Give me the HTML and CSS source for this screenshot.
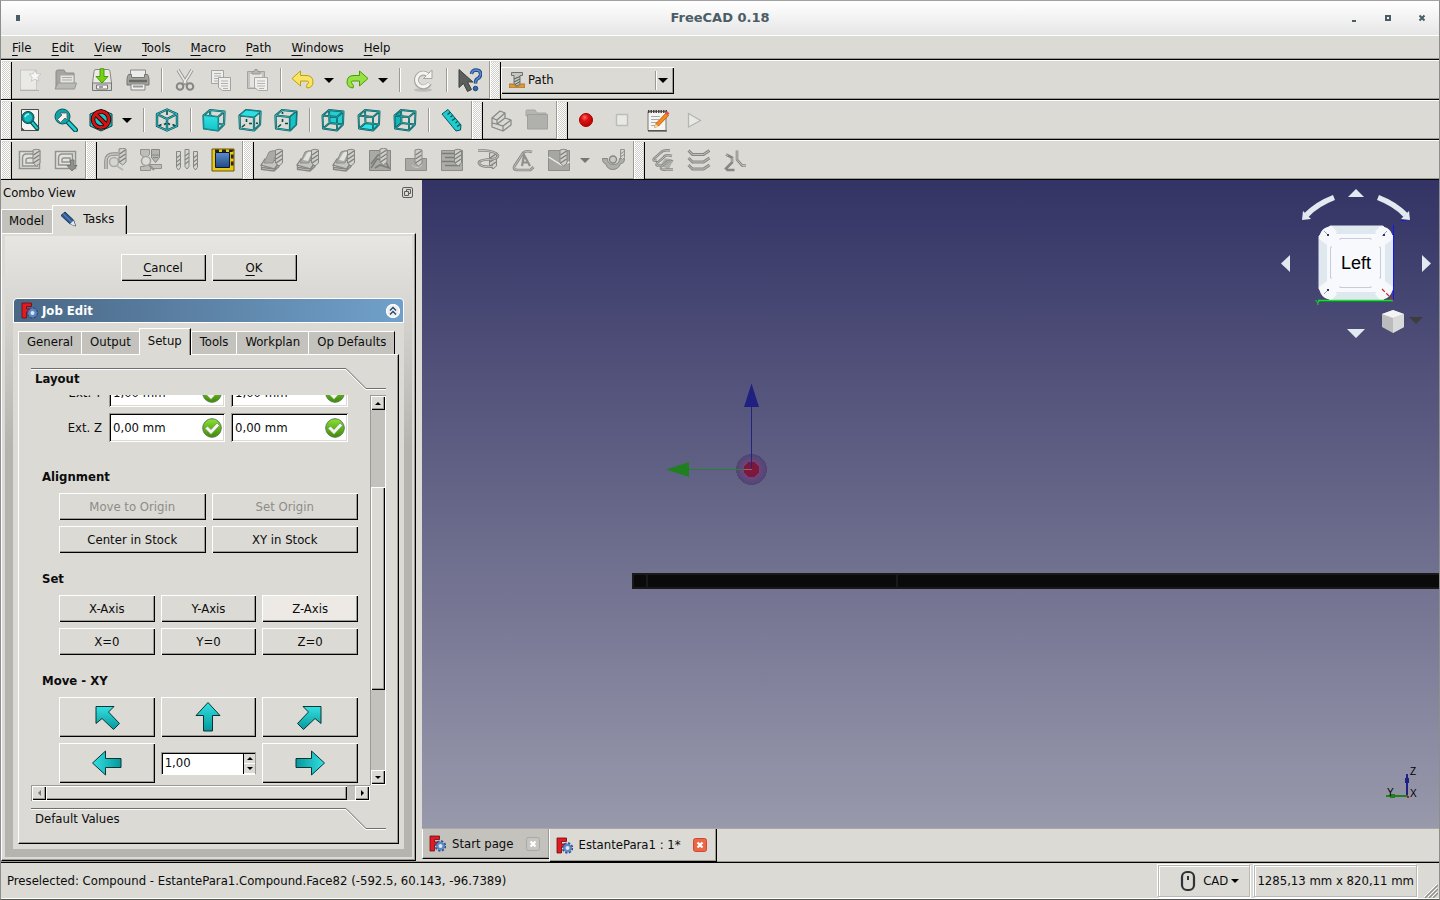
FILE: index.html
```html
<!DOCTYPE html>
<html lang="en">
<head>
<meta charset="utf-8">
<title>FreeCAD 0.18</title>
<link rel="stylesheet" href="styles.css">
</head>
<body>
<svg class="defs" width="0" height="0" aria-hidden="true">
  <defs>
    <linearGradient id="g-teal" x1="0" y1="0" x2="0" y2="1"><stop offset="0" stop-color="#34e0e2"/><stop offset="1" stop-color="#06989a"/></linearGradient>
    <linearGradient id="g-face" x1="0" y1="0" x2="0" y2="1"><stop offset="0" stop-color="#34e0e2"/><stop offset="1" stop-color="#16c4c8"/></linearGradient>
    <linearGradient id="g-green" x1="0" y1="0" x2="0" y2="1"><stop offset="0" stop-color="#8ae234"/><stop offset="1" stop-color="#3c8a04"/></linearGradient>
    <linearGradient id="g-blue" x1="0" y1="0" x2="0" y2="1"><stop offset="0" stop-color="#5d8cc8"/><stop offset="1" stop-color="#204a87"/></linearGradient>
    <radialGradient id="g-rec" cx="0.4" cy="0.3" r="0.8"><stop offset="0" stop-color="#ff6a6a"/><stop offset="0.35" stop-color="#e01010"/><stop offset="1" stop-color="#a80000"/></radialGradient>
    <radialGradient id="g-orb"><stop offset="0" stop-color="#803070"/><stop offset="0.5" stop-color="#6c4580"/><stop offset="1" stop-color="#4c4770"/></radialGradient>
    <g id="bit">
      <path d="M0.5 1q3.500-1.500 7 0v13l-3.500 3-3.500-3z" fill="#cfcfcb" stroke="#868683"/>
      <path d="M1 6l6-4M1 10l6-4M1 14l6-4" fill="none" stroke="#7c7c79" stroke-width="1.200"/>
    </g>
    <path id="wire" d="M1.500 7.500L16 9V22.500L2 20.500ZM8 2L22.500 3.500L22 16.500L8.500 15ZM1.500 7.500L8 2M16 9L22.500 3.500M16 22.500L22 16.500M2 20.500L8.500 15" fill="none" stroke-linejoin="round"/>
    <path id="hull" d="M1.500 7.500L16 9V22.500L2 20.500ZM1.500 7.500L8 2L22.500 3.500L22 16.500L16 22.500M16 9L22.500 3.500" fill="none" stroke-linejoin="round"/>
    <g id="caddie">
      <path d="M1 17l4-6 14 2-4 8z" fill="#c4c4c0" stroke="#868683" stroke-width="1.300"/>
      <path d="M1.500 17.500v4l12.500 1.500 5-4.500v-5M2 19.500l12 1.500 5-5" fill="none" stroke="#868683" stroke-width="1.300"/>
      <path d="M4 15l5-11q3-2 8-1l-4 12z" fill="#aaaaa7" stroke="#8f8f8c"/>
    </g>

    <symbol id="i-new" viewBox="0 0 24 24"><path d="M2.500 2h16v20h-16z" fill="#e9e9e6" stroke="#c6c6c2"/><path d="M2 22.500h19" stroke="#b2b2ae"/><path d="M17 2l1.600 3.600 4.400.6-3.200 2.800 1 4.300-3.800-2.200-3.700 2.200.9-4.300-3.200-2.800 4.300-.6z" fill="#f6f6f4" stroke="#c2c2be" stroke-width=".8"/></symbol>
    <symbol id="i-open" viewBox="0 0 24 24"><path d="M2 20V4q0-2 2-2h6l2 3h8v15z" fill="#a5a5a2" stroke="#8c8c89"/><path d="M6 7h14v9H6z" fill="#e4e4e1" stroke="#a2a29f"/><path d="M8 9.500h10M8 12h10" stroke="#aaa"/><path d="M1 21l3-6h18.500l-2 6z" fill="#b9b9b6" stroke="#979794"/></symbol>
    <symbol id="i-save" viewBox="0 0 24 24"><path d="M4 3.500q0-2 2-2h12q2 0 2 2L21.500 15v7h-19v-7z" fill="#eaeae7" stroke="#878784"/><path d="M2.500 15h19v7.500h-19z" fill="#d3d3d0" stroke="#777"/><path d="M6.500 17h11v4h-11z" fill="#f4f4f2" stroke="#777"/><path d="M9 19h4" stroke="#444"/><path d="M10 .8h4v7.700h4L12 15 6 8.500h4z" fill="#73d216" stroke="#4e9a06"/></symbol>
    <symbol id="i-print" viewBox="0 0 24 24"><path d="M4.500 2h15v8h-15z" fill="#ececea" stroke="#8a8a87"/><path d="M2.500 6.500h3v3h13v-3h3q1.500 2 1.500 5V17h-22v-5.500q0-3 1.500-5z" fill="#a2a29f" stroke="#777774"/><path d="M3 13h18" stroke="#696966" stroke-width="2.500"/><path d="M5 16h14v6H5z" fill="#f0f0ee" stroke="#868683"/><path d="M7 18.500h10" stroke="#999" stroke-width="2"/></symbol>
    <symbol id="i-cut" viewBox="0 0 24 24"><path d="M5 2l9 14.500M19 2l-9 14.500" stroke="#969693" stroke-width="3.400"/><path d="M5 2l8 13M19 2l-8 13" stroke="#e9e9e6" stroke-width="1.600"/><circle cx="7" cy="18.500" r="3.300" fill="none" stroke="#868683" stroke-width="2"/><circle cx="17" cy="18.500" r="3.300" fill="none" stroke="#868683" stroke-width="2"/></symbol>
    <symbol id="i-copy" viewBox="0 0 24 24"><path d="M2.500 2.500h12v13h-12z" fill="#eeeeec" stroke="#a3a3a0"/><path d="M5 5.500h7M5 8h7M5 10.500h6M5 13h5" stroke="#b0b0ad"/><path d="M9.500 9.500h12v13h-8l-4-3z" fill="#eeeeec" stroke="#a3a3a0"/><path d="M12 13h7M12 15.500h7M12 18h7M14 20.500h5" stroke="#b0b0ad"/></symbol>
    <symbol id="i-paste" viewBox="0 0 24 24"><path d="M2.500 3.500h17v17h-17z" fill="#c4c4c0" stroke="#a3a3a0"/><path d="M5 6h12v13H5z" fill="#e4e4e1"/><path d="M7 6V3.500h2l1-2h2l1 2h2V6z" fill="#b7b7b3" stroke="#979794"/><path d="M9.500 9.500h13v13h-9l-4-3z" fill="#efefed" stroke="#a9a9a6"/><path d="M12 13h8M12 15.500h8M12 18h8M14 20.500h5" stroke="#b4b4b0"/></symbol>
    <symbol id="i-undo" viewBox="0 0 24 24"><path d="M1 10.500L9.500 3v4.500H15q7 0 7 6.500 0 5.500-6 6-1.500-3 1-4.500 2-2.500-2-2.500H9.500V18z" fill="#f8e465" stroke="#c4a000" stroke-linejoin="round"/></symbol>
    <symbol id="i-redo" viewBox="0 0 24 24"><path d="M23 10.500L14.500 3v4.500H9q-7 0-7 6.500 0 5.500 6 6 1.500-3-1-4.500-2-2.500 2-2.500h5.500V18z" fill="#95e245" stroke="#4e9a06" stroke-linejoin="round"/></symbol>
    <symbol id="i-refresh" viewBox="0 0 24 24"><ellipse cx="12" cy="22" rx="9" ry="1.800" fill="#bdbdb9"/><path d="M18.500 15.500A7 7 0 1 1 16.500 6.500" fill="none" stroke="#a5a5a2" stroke-width="5"/><path d="M21 2V10.500H12.500z" fill="#f4f4f2" stroke="#a5a5a2"/><path d="M18 15.500A6.800 6.800 0 1 1 16.500 6.500" fill="none" stroke="#f4f4f2" stroke-width="3"/></symbol>
    <symbol id="i-what" viewBox="0 0 24 24"><path d="M1 1.500v18l4.500-4 4 8 4-2-4-7.500h5.500z" fill="#5b5e5a" stroke="#3d403d" stroke-linejoin="round"/><path d="M13.500 6q.5-4 5-4 4.500.5 4 5-.4 2.500-3.500 4-1.500 1-1.500 4.500" fill="none" stroke="#204a87" stroke-width="3.600"/><path d="M13.500 6q.5-4 5-4 4.500.5 4 5-.4 2.500-3.500 4-1.500 1-1.500 4.500" fill="none" stroke="#5d8cc8" stroke-width="1.500"/><circle cx="17.500" cy="20.500" r="2.300" fill="#3465a4" stroke="#204a87"/></symbol>
    <symbol id="i-path" viewBox="0 0 16 16"><path d="M0 12h5l1 2h4l1-2h5v4H0z" fill="#d99b3d" stroke="#9a6a20" stroke-width=".8"/><path d="M2.500 0.500h11v3h-2.500v8l-3 2.500-3-2.500v-8H2.500z" fill="#c4c6c2" stroke="#6e706c"/><path d="M5 7l6-2.500M5 10l6-3M6 12.500l5-3" stroke="#555753"/></symbol>

    <symbol id="i-fit" viewBox="0 0 24 24"><path d="M3.500 1.500h17v21h-14l-3-3z" fill="#f3f3f1" stroke="#4a4c4a"/><path d="M3 18v5h6q-4-1-6-5z" fill="#555753"/><path d="M13 13l6 7" stroke="#06484a" stroke-width="4.500" stroke-linecap="round"/><path d="M13 13l6 7" stroke="#1cc6ca" stroke-width="2.400" stroke-linecap="round"/><circle cx="10" cy="9.500" r="6" fill="#078a8d" stroke="#06484a"/><circle cx="10" cy="9.500" r="4.200" fill="#18bcc0"/><path d="M7 9q1-3 4-3" stroke="#a9f2f3" fill="none" stroke-width="1.500"/></symbol>
    <symbol id="i-fitsel" viewBox="0 0 24 24"><path d="M13 13l8.500 9" stroke="#06484a" stroke-width="5" stroke-linecap="round"/><path d="M13 13l8.500 9" stroke="#20cfd2" stroke-width="2.800" stroke-linecap="round"/><circle cx="8.500" cy="8.500" r="7.500" fill="#0fa5a8" stroke="#06585a"/><path d="M3.500 11.500L8 7 6 5h7v7l-2-2-4.500 4.500z" fill="#f3f3f1" stroke="#555" stroke-width=".8"/></symbol>
    <symbol id="i-draw" viewBox="0 0 24 24"><path d="M1 6L12 1.500 23 6v12l-11 5-11-5z" fill="#18c4c8" stroke="#06484a" stroke-linejoin="round"/><circle cx="12" cy="11.500" r="8" fill="none" stroke="#300" stroke-width="4.600"/><path d="M6.500 6l11 11" stroke="#300" stroke-width="4.600"/><circle cx="12" cy="11.500" r="8" fill="none" stroke="#d01414" stroke-width="2.800"/><path d="M6.500 6l11 11" stroke="#d01414" stroke-width="2.800"/></symbol>
    <symbol id="i-iso" viewBox="0 0 24 24"><g fill="none" stroke-linejoin="round"><path d="M12 1.500L22 6v12l-10 4.500L2 18V6zM2 6l10 5 10-5M12 11v11.500" stroke="#06585a" stroke-width="2.400"/><path d="M12 3v4M12 15l-3 1.500M12 15l3 1.500M3.500 18l3-1.500M20.500 18l-3-1.500" stroke="#06484a" stroke-width="1.600"/><path d="M12 1.500L22 6v12l-10 4.500L2 18V6zM2 6l10 5 10-5M12 11v11.500" stroke="#3cc4c7" stroke-width=".9"/></g></symbol>
    <symbol id="i-front" viewBox="0 0 24 24"><use href="#wire" stroke="#07585a" stroke-width="2.200"/><use href="#wire" stroke="#3cc4c7" stroke-width=".8"/><path d="M1.500 7.500L16 9V22.500L2 20.500Z" fill="url(#g-face)" stroke="#0b9094"/></symbol>
    <symbol id="i-top" viewBox="0 0 24 24"><use href="#hull" stroke="#07585a" stroke-width="2.200"/><use href="#hull" stroke="#3cc4c7" stroke-width=".8"/><path d="M1.500 7.500L8 2l14.500 1.500L16 9z" fill="#2fdde0" stroke="#0b8286"/><path d="M8.500 11v3M11 15.500h3M4 19l3-2.500M18 15l2 .5" stroke="#064a4c" stroke-width="1.600"/></symbol>
    <symbol id="i-right" viewBox="0 0 24 24"><use href="#hull" stroke="#07585a" stroke-width="2.200"/><use href="#hull" stroke="#3cc4c7" stroke-width=".8"/><path d="M16 9l6.500-5.500L22 16.500l-6 6z" fill="#16c4c8" stroke="#07686b"/><path d="M8.500 4v2M8.500 11v3M11 15.500h3M4 19l3-2.500" stroke="#064a4c" stroke-width="1.600"/></symbol>
    <symbol id="i-rear" viewBox="0 0 24 24"><path d="M8 2l14.500 1.500L22 16.500 8.500 15z" fill="#25cdd1"/><use href="#wire" stroke="#07585a" stroke-width="1.900"/><use href="#wire" stroke="#3cc4c7" stroke-width=".6"/></symbol>
    <symbol id="i-bottom" viewBox="0 0 24 24"><path d="M2 20.500L8.500 15l13.500 1.500-6 6z" fill="#2fe3e6"/><use href="#wire" stroke="#07585a" stroke-width="1.900"/><use href="#wire" stroke="#3cc4c7" stroke-width=".6"/></symbol>
    <symbol id="i-left" viewBox="0 0 24 24"><path d="M1.500 7.500L8 2l.5 13L2 20.500z" fill="#17b4b8"/><use href="#wire" stroke="#07585a" stroke-width="1.900"/><use href="#wire" stroke="#3cc4c7" stroke-width=".6"/></symbol>
    <symbol id="i-ruler" viewBox="0 0 24 24"><path d="M2 6l6-4.500L21 17l-.5 5-4.500 1z" fill="#20ccd0" stroke="#06585a" stroke-linejoin="round"/><path d="M10 4.500L7.500 6.500M12.500 7.500l-2 1.500M15 10.500l-3 2M17.500 13.500l-2 1.500M20 16.500l-3 2" stroke="#064a4c" stroke-width="1.200"/></symbol>

    <symbol id="i-part" viewBox="0 0 24 24"><path d="M3 10l8-7 5 2v5l6 2v5l-8 6-11-4z" fill="#d8d8d4" stroke="#868683" stroke-width="1.200" stroke-linejoin="round"/><path d="M3 10l5 2 8-7M8 12v4l6 2 8-6M3 15l5 1 8-6M14 18v5" fill="none" stroke="#868683" stroke-width="1.200"/></symbol>
    <symbol id="i-folder" viewBox="0 0 24 24"><path d="M1 3q0-1 1-1h8l2 3h9v3H1z" fill="#b5b5b2" stroke="#a8a8a5"/><path d="M2.500 6.500h20V21h-20z" fill="#b0b0ad" stroke="#a0a09d"/></symbol>
    <symbol id="i-rec" viewBox="0 0 24 24"><circle cx="12" cy="12" r="6.500" fill="url(#g-rec)" stroke="#a40000"/></symbol>
    <symbol id="i-stop" viewBox="0 0 24 24"><path d="M6.500 6.500h11v11h-11z" fill="#e8e8e5" stroke="#bcbcb8" stroke-width="1.400"/></symbol>
    <symbol id="i-note" viewBox="0 0 24 24"><path d="M2 3.500h18v19H2z" fill="#f4f4f2" stroke="#777"/><path d="M2 3.500h19" stroke="#444" stroke-width="3" stroke-dasharray="1.500 1"/><path d="M5 8.500h9M5 11.500h8M5 14.500h7M5 17.500h5" stroke="#aaa"/><path d="M2 23h19" stroke="#333"/><path d="M8.500 19.500l1.500-4L20 5l2.500 2.500L12.500 18z" fill="#f5891d" stroke="#b05a0a" stroke-width=".8"/><path d="M19.500 5l1.500-2 2.500 2.500-2 2z" fill="#ef4a4a"/><path d="M8 20l1.500-4 3 2.500z" fill="#f3d9a8"/></symbol>
    <symbol id="i-play" viewBox="0 0 24 24"><path d="M6.500 5.500l12 7-12 6.500z" fill="#e8e8e5" stroke="#b4b4b0" stroke-width="1.200"/></symbol>

    <symbol id="i-job" viewBox="0 0 24 24"><path d="M1.500 3.500h20v17h-20z" fill="#e2e2df" stroke="#92928f" stroke-width="1.500"/><path d="M4.500 18V10q0-4 4-4h11v12z" fill="none" stroke="#92928f" stroke-width="1.500"/><path d="M8 15v-3q0-2 3-2h5v5z" fill="none" stroke="#92928f" stroke-width="1.400"/><use href="#bit" x="14.500" y="1"/></symbol>
    <symbol id="i-post" viewBox="0 0 24 24"><path d="M1.500 3.500h20v17h-20z" fill="#e2e2df" stroke="#92928f" stroke-width="1.500"/><path d="M4.500 17V10q0-4 4-4h10v11z" fill="none" stroke="#92928f" stroke-width="1.500"/><path d="M8 14v-2q0-2 2-2h6v4z" fill="none" stroke="#92928f" stroke-width="1.400"/><path d="M16.500 12h3.500v5.500h3l-5 5.500-5-5.500h3.500z" fill="#8f8f8c" stroke="#767673"/></symbol>
    <symbol id="i-inspect" viewBox="0 0 24 24"><path d="M3 21V13q0-7 8-7h4" fill="none" stroke="#8d8d8a" stroke-width="3.600"/><path d="M3 21V13q0-7 8-7h4" fill="none" stroke="#c4c4c0" stroke-width="1.600"/><circle cx="11" cy="14" r="4.500" fill="#d4d4d1" stroke="#a9a9a6" stroke-width="1.600"/><path d="M14 18l6 4" stroke="#b5b5b2" stroke-width="2"/><use href="#bit" x="15.500" y="0"/></symbol>
    <symbol id="i-sim" viewBox="0 0 24 24"><path d="M1.500 1.500h9v5l-3 3v7h15v4h-11v2h-10v-4h4v-9l-4-3z" fill="#bdbdba" stroke="#92928f"/><path d="M12.500 1.500h8v8l-4 5-4-5z" fill="#b4b4b0" stroke="#868683"/><path d="M12.500 7h8M14 9.500h5" stroke="#868683"/><circle cx="7" cy="13" r="4.500" fill="#dcdcd8" stroke="#a2a29f" stroke-width="1.600"/><path d="M10 17l5 5" stroke="#92928f" stroke-width="2"/></symbol>
    <symbol id="i-tools" viewBox="0 0 24 24"><g fill="#d5d5d1" stroke="#868683"><path d="M1.500 3.500h4v16l-2 2.500-2-2.500zM10 1.500h4v17l-2 2.500-2-2.500zM18.500 3.500h4v16l-2 2.500-2-2.500z"/></g><path d="M1.500 10l4-3M1.500 14l4-3M1.500 18l4-3M10 8l4-3M10 12l4-3M10 16l4-3M18.500 10l4-3M18.500 14l4-3M18.500 18l4-3" stroke="#868683" stroke-width="1.200"/></symbol>
    <symbol id="i-stock" viewBox="0 0 24 24"><path d="M1 1h22v22H1z" fill="#e9c81c" stroke="#6b5900"/><path d="M4 2.800h17.200V20" fill="none" stroke="#2a2508" stroke-width="2.600" stroke-dasharray="4 3"/><path d="M4.500 4.500h14v15h-14z" fill="url(#g-blue)" stroke="#0b1a33"/></symbol>
    <symbol id="i-contour" viewBox="0 0 24 24"><use href="#caddie"/><use href="#bit" x="15" y="1"/></symbol>
    <symbol id="i-profile" viewBox="0 0 24 24"><use href="#caddie"/><path d="M7 12l4-7q2-2 5-1l-4 9z" fill="#e2e2df"/><use href="#bit" x="15" y="1"/></symbol>
    <symbol id="i-pocket" viewBox="0 0 24 24"><path d="M1.500 2.500h21v20h-21z" fill="#a9a9a6" stroke="#868683"/><path d="M3 20l6-9 8 1 4 8-9-3-5 3" fill="none" stroke="#7c7c79" stroke-width="1.600"/><path d="M3 16l7-9h6" stroke="#7b7b78" stroke-width="1.600" fill="none"/><use href="#bit" x="11.500" y="0"/></symbol>
    <symbol id="i-drill" viewBox="0 0 24 24"><path d="M1.500 10.500h21v12h-21z" fill="#a9a9a6" stroke="#8d8d8a"/><path d="M8 17q5 5 10 0" stroke="#ccc" fill="none"/><use href="#bit" x="10.500" y="1"/></symbol>
    <symbol id="i-face" viewBox="0 0 24 24"><path d="M1.500 2.500h21v20h-21z" fill="#adadaa" stroke="#8d8d8a"/><path d="M2 5.500h14M5 9.500h12M2 13.500h14M5 17.500h15" stroke="#7b7b78" stroke-width="1.500"/><use href="#bit" x="14" y="1"/></symbol>
    <symbol id="i-helix" viewBox="0 0 24 24"><use href="#bit" x="13" y="4"/><path d="M2 2.500h7q11 1 13 5 0 4-11 4-9 1-8 4 2 4 14 3" fill="none" stroke="#868683" stroke-width="2.600"/><path d="M2 2.500h7q11 1 13 5 0 4-11 4-9 1-8 4 2 4 14 3" fill="none" stroke="#c8c8c4" stroke-width=".9"/></symbol>
    <symbol id="i-engrave" viewBox="0 0 24 24"><path d="M20 4q-6-2-9 1L2.500 18q-2 4 3 4h13l3-3" fill="none" stroke="#868683" stroke-width="2.600"/><path d="M20 4q-6-2-9 1L2.500 18q-2 4 3 4h13l3-3" fill="none" stroke="#c8c8c4" stroke-width=".9"/><path d="M10 18l2-11 6 11M11 14.500h5" fill="none" stroke="#8f8f8c" stroke-width="2.200"/></symbol>
    <symbol id="i-deburr" viewBox="0 0 24 24"><path d="M1.500 2.500h21v20h-21z" fill="#a6a6a3" stroke="#8d8d8a"/><path d="M1.500 9l13 8 8-3" fill="none" stroke="#efefed" stroke-width="1.400"/><use href="#bit" x="12.500" y="1"/></symbol>
    <symbol id="i-surface" viewBox="0 0 24 24"><path d="M0.500 10.500h5q0 6 6 6t6-6l5 0q0 5-4 5-2 6-8 6-5 0-7-6-3 0-3-5z" fill="#adadaa" stroke="#868683"/><circle cx="11" cy="11.500" r="3.500" fill="#cacac7" stroke="#868683" stroke-width="1.400"/><path d="M18.500 1.500h4v8l-2 2-2-2z" fill="#d2d2ce" stroke="#92928f"/><path d="M18.500 6l4-3M18.500 9l4-3" stroke="#92928f"/></symbol>
    <symbol id="i-copyop" viewBox="0 0 24 24"><path d="M14 10l8 2-4 9-9-3z" fill="#adadaa"/><g fill="none" stroke="#868683" stroke-width="2.400"><path d="M19 2.500q-7-1-9 2l-7 6q-2 3 3 2M21 8q-7-2-9 2l-6 5q-2 4 4 2M22 13.500q-5-2-8 2l-4 3q-1 4 5 3h7"/></g><g fill="none" stroke="#c6c6c2" stroke-width=".8"><path d="M19 2.500q-7-1-9 2l-7 6q-2 3 3 2M21 8q-7-2-9 2l-6 5q-2 4 4 2M22 13.500q-5-2-8 2l-4 3q-1 4 5 3h7"/></g></symbol>
    <symbol id="i-array" viewBox="0 0 24 24"><g fill="none" stroke="#868683" stroke-width="2.800"><path d="M1.500 2.500l4 4h11l6-4M1.500 10l4 4h11l6-4M1.500 17l4 4h11l6-4"/></g><g fill="none" stroke="#c6c6c2" stroke-width=".9"><path d="M1.500 2.500l4 4h11l6-4M1.500 10l4 4h11l6-4M1.500 17l4 4h11l6-4"/></g></symbol>
    <symbol id="i-simplecopy" viewBox="0 0 24 24"><g fill="none" stroke="#868683" stroke-width="2.600"><path d="M3 6.500l6 3v5l-6 6 1.500 1.500h7M14 2.500v9l5 6h4"/></g><g fill="none" stroke="#c6c6c2" stroke-width=".9"><path d="M3 6.500l2 1M9 10v4M14 2.500v9l5 6h4"/></g></symbol>

    <symbol id="i-logo" viewBox="0 0 17 17"><path d="M1 1h9.500v3.500H5.500V7H9v3H5.500v6H1z" fill="#e01b24" stroke="#6e0a0e" stroke-width=".8"/><circle cx="11.500" cy="11" r="4.500" fill="none" stroke="#2b4f86" stroke-width="2.400" stroke-dasharray="2 1.530"/><circle cx="11.500" cy="11" r="3.200" fill="#dce6f2" stroke="#5b86c2" stroke-width="2.400"/></symbol>
    <symbol id="i-pencil" viewBox="0 0 16 16"><path d="M1 4.500L5 1l8.500 8L15.500 15 9.500 12.500z" fill="#2d5a94" stroke="#173660"/><path d="M3 2.500l8.500 8.500" stroke="#6d9cd0"/><path d="M10 13l3.500-3.500L15.500 15z" fill="#e8e8e4"/></symbol>
    <symbol id="i-ok" viewBox="0 0 20 20"><circle cx="10" cy="10" r="9.300" fill="url(#g-green)" stroke="#5c7c58"/><path d="M3 10.500l2.500-2.500 3.500 3.500L15 5l2.500 2.500-8.500 9z" fill="#f4f4f0" stroke="#5f8a40" stroke-width=".6"/></symbol>
    <symbol id="i-arrow" viewBox="0 0 32 32"><path d="M16 1.500L28 14.500h-7.500v15.500h-9V14.500H4z" fill="url(#g-teal)" stroke="#0a3536" stroke-linejoin="round"/></symbol>
    <symbol id="i-diag" viewBox="0 0 32 32"><path d="M5 5.500H23l-5.500 5.500 11 11.500-6 6L11 17.500l-6 5z" fill="url(#g-teal)" stroke="#0a3536" stroke-linejoin="round"/></symbol>
    <symbol id="i-x" viewBox="0 0 14 14"><rect x=".5" y=".5" width="13" height="13" rx="2" class="x-box"/><path d="M4.500 4.500l5 5M9.500 4.500l-5 5" stroke="#fff" stroke-width="2.200"/></symbol>
    <symbol id="i-fold" viewBox="0 0 40 22"><path d="M0 .5L20 20.500H40" fill="none" stroke="#716f70"/><path d="M0 2L19.500 21.500H40" fill="none" stroke="#fff"/></symbol>
  </defs>
</svg>

<header class="titlebar">
  <span class="app-mark"></span>
  <h1>FreeCAD 0.18</h1>
  <div class="window-buttons">
    <button class="win" aria-label="Minimize"><svg width="8" height="8"><path d="M2 6h4v2H2z" fill="#4a5d66"/></svg></button>
    <button class="win" aria-label="Maximize"><svg width="8" height="8"><path d="M2 2h4v4H2z" fill="none" stroke="#4a5d66" stroke-width="2"/></svg></button>
    <button class="win" aria-label="Close"><svg width="8" height="8"><path d="M1.500 1.500l5 5M6.500 1.500l-5 5" stroke="#4a5d66" stroke-width="2"/></svg></button>
  </div>
</header>

<nav class="menubar">
  <button><u>F</u>ile</button><button><u>E</u>dit</button><button><u>V</u>iew</button><button><u>T</u>ools</button><button><u>M</u>acro</button><button><u>P</u>ath</button><button><u>W</u>indows</button><button><u>H</u>elp</button>
</nav>

<div class="toolrow">
  <div class="toolbar">
    <span class="grip"></span>
    <button class="tool" aria-label="New"><svg><use href="#i-new"/></svg></button>
    <button class="tool" aria-label="Open"><svg><use href="#i-open"/></svg></button>
    <button class="tool" aria-label="Save"><svg><use href="#i-save"/></svg></button>
    <button class="tool" aria-label="Print"><svg><use href="#i-print"/></svg></button>
    <span class="sep"></span>
    <button class="tool" aria-label="Cut"><svg><use href="#i-cut"/></svg></button>
    <button class="tool" aria-label="Copy"><svg><use href="#i-copy"/></svg></button>
    <button class="tool" aria-label="Paste"><svg><use href="#i-paste"/></svg></button>
    <span class="sep"></span>
    <button class="tool split" aria-label="Undo"><svg><use href="#i-undo"/></svg><i class="tri"></i></button>
    <button class="tool split" aria-label="Redo"><svg><use href="#i-redo"/></svg><i class="tri"></i></button>
    <span class="sep"></span>
    <button class="tool" aria-label="Refresh"><svg><use href="#i-refresh"/></svg></button>
    <span class="sep"></span>
    <button class="tool" aria-label="What's this?"><svg><use href="#i-what"/></svg></button>
  </div>
  <div class="toolbar last">
    <span class="grip"></span>
    <div class="combo">
      <svg class="combo-icon" width="16" height="16"><use href="#i-path"/></svg>
      <select aria-label="Workbench"><option>Path</option></select>
      <span class="combo-arrow"><i class="tri"></i></span>
    </div>
  </div>
</div>

<div class="toolrow">
  <div class="toolbar">
    <span class="grip"></span>
    <button class="tool" aria-label="Fit all"><svg><use href="#i-fit"/></svg></button>
    <button class="tool" aria-label="Fit selection"><svg><use href="#i-fitsel"/></svg></button>
    <button class="tool split" aria-label="Draw style"><svg><use href="#i-draw"/></svg><i class="tri"></i></button>
    <span class="sep"></span>
    <button class="tool" aria-label="Isometric"><svg><use href="#i-iso"/></svg></button>
    <span class="sep"></span>
    <button class="tool" aria-label="Front"><svg><use href="#i-front"/></svg></button>
    <button class="tool" aria-label="Top"><svg><use href="#i-top"/></svg></button>
    <button class="tool" aria-label="Right"><svg><use href="#i-right"/></svg></button>
    <span class="sep"></span>
    <button class="tool" aria-label="Rear"><svg><use href="#i-rear"/></svg></button>
    <button class="tool" aria-label="Bottom"><svg><use href="#i-bottom"/></svg></button>
    <button class="tool" aria-label="Left"><svg><use href="#i-left"/></svg></button>
    <span class="sep"></span>
    <button class="tool" aria-label="Measure"><svg><use href="#i-ruler"/></svg></button>
  </div>
  <div class="toolbar">
    <span class="grip"></span>
    <button class="tool" aria-label="Create part"><svg><use href="#i-part"/></svg></button>
    <button class="tool" aria-label="Create group"><svg><use href="#i-folder"/></svg></button>
  </div>
  <div class="toolbar last">
    <span class="grip"></span>
    <button class="tool" aria-label="Record macro"><svg><use href="#i-rec"/></svg></button>
    <button class="tool" aria-label="Stop macro"><svg><use href="#i-stop"/></svg></button>
    <button class="tool" aria-label="Macros"><svg><use href="#i-note"/></svg></button>
    <button class="tool" aria-label="Run macro"><svg><use href="#i-play"/></svg></button>
  </div>
</div>

<div class="toolrow">
  <div class="toolbar">
    <span class="grip"></span>
    <button class="tool" aria-label="Job"><svg><use href="#i-job"/></svg></button>
    <button class="tool" aria-label="Post process"><svg><use href="#i-post"/></svg></button>
  </div>
  <div class="toolbar">
    <span class="grip"></span>
    <button class="tool" aria-label="Inspect"><svg><use href="#i-inspect"/></svg></button>
    <button class="tool" aria-label="Simulate"><svg><use href="#i-sim"/></svg></button>
    <button class="tool" aria-label="Tool manager"><svg><use href="#i-tools"/></svg></button>
    <button class="tool" aria-label="Stock"><svg><use href="#i-stock"/></svg></button>
  </div>
  <div class="toolbar">
    <span class="grip"></span>
    <button class="tool" aria-label="Contour"><svg><use href="#i-contour"/></svg></button>
    <button class="tool" aria-label="Profile faces"><svg><use href="#i-profile"/></svg></button>
    <button class="tool" aria-label="Profile edges"><svg><use href="#i-profile"/></svg></button>
    <button class="tool" aria-label="Pocket"><svg><use href="#i-pocket"/></svg></button>
    <button class="tool" aria-label="Drilling"><svg><use href="#i-drill"/></svg></button>
    <button class="tool" aria-label="Face"><svg><use href="#i-face"/></svg></button>
    <button class="tool" aria-label="Helix"><svg><use href="#i-helix"/></svg></button>
    <button class="tool" aria-label="Engrave"><svg><use href="#i-engrave"/></svg></button>
    <button class="tool split off" aria-label="Deburr"><svg><use href="#i-deburr"/></svg><i class="tri"></i></button>
    <button class="tool" aria-label="Surface"><svg><use href="#i-surface"/></svg></button>
  </div>
  <div class="toolbar last">
    <span class="grip"></span>
    <button class="tool" aria-label="Copy operation"><svg><use href="#i-copyop"/></svg></button>
    <button class="tool" aria-label="Array"><svg><use href="#i-array"/></svg></button>
    <button class="tool" aria-label="Simple copy"><svg><use href="#i-simplecopy"/></svg></button>
  </div>
</div>

<main class="work">
  <aside class="dock">
    <div class="dock-title"><span>Combo View</span>
      <button class="float" aria-label="Float"><svg width="11" height="11" fill="none" stroke="#5c5c5a"><rect x=".5" y=".5" width="10" height="10" rx="1.500"/><path d="M2.500 4.500h4v4h-4zM4.500 4.500v-2h4v4h-2"/></svg></button>
    </div>
    <div class="tabs dock-tabs">
      <button class="tab">Model</button>
      <button class="tab on"><svg width="16" height="16"><use href="#i-pencil"/></svg>Tasks</button>
    </div>
    <div class="frame dock-frame">
      <div class="tasks">
        <div class="dialog-buttons">
          <button class="btn"><span><u>C</u>ancel</span></button>
          <button class="btn"><span><u>O</u>K</span></button>
        </div>
        <section class="job">
          <div class="job-head">
            <svg width="17" height="17"><use href="#i-logo"/></svg>
            <h2>Job Edit</h2>
            <button class="collapse" aria-label="Collapse"><svg width="14" height="14" fill="none" stroke="#2f4358" stroke-width="1.300"><circle cx="7" cy="7" r="6.500" fill="#e8eef4" stroke="#fff"/><path d="M4 6.500l3-3 3 3M4 10.500l3-3 3 3"/></svg></button>
          </div>
          <div class="job-body">
            <div class="tabs job-tabs">
              <button class="tab">General</button><button class="tab">Output</button><button class="tab on">Setup</button><button class="tab">Tools</button><button class="tab">Workplan</button><button class="tab">Op Defaults</button>
            </div>
            <div class="frame page">
              <button class="fold"><b>Layout</b><svg width="40" height="22"><use href="#i-fold"/></svg></button>
              <div class="scroller">
                <div class="view">
                  <div class="setup">
                    <div class="ext">
                      <label for="y1">Ext. Y</label>
                      <span class="field"><input id="y1" value="1,00 mm"><svg width="20" height="20"><use href="#i-ok"/></svg></span>
                      <span class="field"><input aria-label="Ext. Y plus" value="1,00 mm"><svg width="20" height="20"><use href="#i-ok"/></svg></span>
                      <label for="z1">Ext. Z</label>
                      <span class="field"><input id="z1" value="0,00 mm"><svg width="20" height="20"><use href="#i-ok"/></svg></span>
                      <span class="field"><input aria-label="Ext. Z plus" value="0,00 mm"><svg width="20" height="20"><use href="#i-ok"/></svg></span>
                    </div>
                    <h3 class="first">Alignment</h3>
                    <div class="grid two">
                      <button class="btn" disabled>Move to Origin</button><button class="btn" disabled>Set Origin</button>
                      <button class="btn">Center in Stock</button><button class="btn">XY in Stock</button>
                    </div>
                    <h3>Set</h3>
                    <div class="grid three">
                      <button class="btn">X-Axis</button><button class="btn">Y-Axis</button><button class="btn hot">Z-Axis</button>
                      <button class="btn">X=0</button><button class="btn">Y=0</button><button class="btn">Z=0</button>
                    </div>
                    <h3>Move - XY</h3>
                    <div class="grid three">
                      <button class="btn tall" aria-label="Up left"><svg width="32" height="32"><use href="#i-diag"/></svg></button>
                      <button class="btn tall" aria-label="Up"><svg width="32" height="32"><use href="#i-arrow"/></svg></button>
                      <button class="btn tall" aria-label="Up right"><svg class="flip" width="32" height="32"><use href="#i-diag"/></svg></button>
                      <button class="btn tall" aria-label="Left"><svg class="west" width="32" height="32"><use href="#i-arrow"/></svg></button>
                      <span class="spin">
                        <input aria-label="Distance" value="1,00">
                        <span class="steps"><button aria-label="Increase"><i class="up"></i></button><button aria-label="Decrease"><i class="down"></i></button></span>
                      </span>
                      <button class="btn tall" aria-label="Right"><svg class="east" width="32" height="32"><use href="#i-arrow"/></svg></button>
                    </div>
                  </div>
                </div>
                <div class="vbar"><button aria-label="Scroll up"><i class="up"></i></button><span class="gap-a"></span><span class="thumb"></span><span class="gap-b"></span><button aria-label="Scroll down"><i class="down"></i></button></div>
                <div class="hbar"><button aria-label="Scroll left"><i class="lt"></i></button><span class="thumb"></span><span class="gap-c"></span><button aria-label="Scroll right"><i class="rt"></i></button></div>
              </div>
              <button class="fold"><span>Default Values</span><svg width="40" height="22"><use href="#i-fold"/></svg></button>
            </div>
          </div>
        </section>
      </div>
    </div>
  </aside>

  <section class="docs">
    <div class="scene">
      <svg class="origin" width="110" height="110">
        <circle cx="87.500" cy="87.500" r="15.500" fill="url(#g-orb)" shape-rendering="crispEdges"/>
        <circle cx="87.500" cy="87.500" r="7.700" fill="#7e183a" shape-rendering="crispEdges"/>
        <path d="M87.500 24V88" stroke="#23237f"/>
        <path d="M24 87.500H80" stroke="#2a7c36"/><path d="M80 87.500h8" stroke="#8c6a6a"/>
        <path d="M87.500 1.500L95 25H80z" fill="#202080"/>
        <path d="M2 87.500L25 80v15z" fill="#208020"/>
      </svg>
      <div class="plank"><span></span><span></span></div>
      <svg class="navcube" width="159" height="160">
        <g fill="#e1e9f1">
          <path d="M76 9l8 8H68zM76 158l9-9H67zM1 83.500l9-8.500v17zM151 83.500l-9-8.500v17z"/>
        </g>
        <path d="M54 17.500Q37 24 26.500 35" fill="none" stroke="#e1e9f1" stroke-width="5.500"/><path d="M22 40l1-9 8 8z" fill="#e1e9f1"/>
        <path d="M98 17.500Q115 24 125.500 35" fill="none" stroke="#e1e9f1" stroke-width="5.500"/><path d="M130 40l-1-9-8 8z" fill="#e1e9f1"/>
        <path d="M50 46h53l10 10v53l-10 11H50l-11-11V56z" fill="#dfe7ef" stroke="#dfe7ef" stroke-linejoin="round"/>
        <path d="M39 59q1-12 13-13l5 6-10 13zM113 59q-1-12-13-13l-5 6 10 13zM39 107q1 12 13 13l5-6-10-13zM113 107q-1 12-13 13l-5-6 10-13z" fill="#f6f8fb"/>
        <rect x="47" y="54" width="58" height="58" rx="4" fill="#f8f9fc"/>
        <g fill="none" stroke="#c9ccd8"><path d="M60 60v-1.500h31V60M60 106v1.500h31V106M52 67h-1.500v31H52M99 67h1.500v31H99"/><path d="M44 51l5 5M107 51l-5 5M44 114l5-5" stroke="#9a9fb5"/></g>
        <path d="M47 54h2v2h-2zM103 54h2v2h-2zM47 109h2v2h-2z" fill="#34346a"/>
        <path d="M113.500 45v75" stroke="#1414ff"/>
        <path d="M38 120.500h75" stroke="#00f010" stroke-width="1.600"/>
        <path d="M102 109l11 11" stroke="#d42020" stroke-width="1.200" stroke-dasharray="4 2"/>
        <path d="M121 40.500h5" stroke="#1414ff"/>
        <text x="76" y="89" class="face-name">Left</text>
        <text x="38" y="125" class="cube-axis">Y</text>
        <path d="M113 130l11 4v13l-11 6-11-6v-13z" fill="#bcbcbc"/><path d="M113 130l11 4-11 4-11-4z" fill="#f4f4f4"/><path d="M113 138l11-4v13l-11 6z" fill="#d9d9d9"/>
        <path d="M129 137h14l-7 7z" fill="#3d3d3d"/>
      </svg>
      <svg class="axes" width="40" height="40">
        <path d="M22 34V12" stroke="#202080" stroke-width="2"/><path d="M20 16h4v5h-4z" fill="#202080"/>
        <path d="M1 34h22" stroke="#208020" stroke-width="2"/><path d="M5 32h5v4H5z" fill="#208020"/><path d="M22 34h2v2h-2z" fill="#a02020"/>
        <text x="25" y="13">Z</text><text x="2" y="34">Y</text><text x="25" y="35">X</text>
      </svg>
    </div>
    <div class="doc-tabs">
      <div class="doc"><svg width="17" height="17"><use href="#i-logo"/></svg><button class="doc-name">Start page</button><button class="close off" aria-label="Close Start page"><svg width="14" height="14"><use href="#i-x"/></svg></button></div>
      <div class="doc on"><svg width="17" height="17"><use href="#i-logo"/></svg><button class="doc-name">EstantePara1 : 1*</button><button class="close" aria-label="Close EstantePara1"><svg width="14" height="14"><use href="#i-x"/></svg></button></div>
    </div>
  </section>
</main>

<footer class="status">
  <p>Preselected: Compound - EstantePara1.Compound.Face82 (-592.5, 60.143, -96.7389)</p>
  <button class="cell nav-style"><svg width="16" height="22" fill="none" stroke="#2e3436"><rect x="2" y="2" width="12" height="18" rx="5" stroke-width="2.200"/><path d="M8 6v4" stroke-width="2"/></svg>CAD<i class="tri"></i></button>
  <span class="cell size">1285,13 mm x 820,11 mm</span>
  <svg class="size-grip" width="14" height="14" fill="none"><path d="M1 14L14 1M5 14l9-9M9 14l5-5" stroke="#93928b" stroke-width="1.500"/><path d="M0 13L13 0M4 13l9-9M8 13l5-5" stroke="#fff"/></svg>
</footer>
</body>
</html>
```
FILE: styles.css
```css
* { box-sizing: border-box; }

:root {
  --bg: #dbdad5;
  --mid: #c3c2bc;
  --shade: #9b9a93;
}

body {
  margin: 0;
  height: 100vh;
  display: flex;
  flex-direction: column;
  overflow: hidden;
  background: var(--bg);
  color: #0c0c0c;
  font: 13px/16px "DejaVu Sans Condensed", "DejaVu Sans", sans-serif;
  border: 1px solid #8e8e8e;
  border-top-color: #a2a2a2;
  border-bottom-color: #555;
}

button, input, select { font: inherit; color: inherit; margin: 0; padding: 0; border: 0; background: none; border-radius: 0; }
h1, h2, h3, p { margin: 0; font-size: 13px; }
svg { flex: none; display: block; }
.defs { position: absolute; }
u { text-underline-offset: 3px; text-decoration-thickness: 1px; }

/* Title bar */
.titlebar { flex: 0 0 35px; display: grid; grid-template-columns: 1fr auto 1fr; align-items: center; background: linear-gradient(#fff, #e6e6e6); border-bottom: 1px solid #fff; }
.titlebar h1 { font: bold 13px/16px "DejaVu Sans", sans-serif; color: #4a5d66; }
.app-mark { width: 4px; height: 6px; margin-left: 15px; background: #4a5d66; }
.window-buttons { display: flex; justify-content: flex-end; gap: 26px; padding-right: 13px; }
.win { width: 8px; height: 8px; }

/* Menu bar */
.menubar { flex: 0 0 24px; display: flex; align-items: center; padding-left: 1px; border-bottom: 1px solid #000; box-shadow: inset 0 -1px var(--shade); }
.menubar button { padding: 0 10px; }

/* Tool bars */
.toolrow { flex: 0 0 40px; display: flex; border-bottom: 1px solid #000; box-shadow: inset 0 1px #fff, inset 0 -1px var(--shade); }
.toolbar { display: flex; align-items: center; margin-top: 1px; border-left: 1px solid #fff; border-right: 1px solid var(--shade); padding-right: 1px; }
.toolbar.last { border-right: 0; flex: 1; }
.grip { align-self: stretch; width: 10px; margin-top: 1px; border-right: 1px solid #000; box-shadow: inset -1px -1px var(--bg); background: conic-gradient(#fff 25%, #cfcec9 0 50%, #fff 0 75%, #cfcec9 0) 0 0 / 2px 2px; }
.tool { width: 36px; height: 36px; display: flex; align-items: center; justify-content: center; }
.tool svg { width: 24px; height: 24px; }
.tool.split { width: 54px; justify-content: flex-start; padding-left: 5px; gap: 9px; }
.tri { width: 0; height: 0; border: 5px solid transparent; border-top-color: #000; border-bottom: 0; }
.off .tri { border-top-color: #777; }
.sep { width: 2px; height: 24px; margin: 0 4px 0 5px; border-left: 1px solid var(--shade); border-right: 1px solid #fff; }
.combo { display: grid; grid-template-columns: 27px 1fr 19px; align-items: center; width: 173px; height: 27px; box-shadow: inset 1px 1px #fff, inset -1px -1px #000, inset -2px -2px var(--shade); }
.combo-icon { grid-area: 1 / 1; margin-left: 8px; }
.combo select { grid-area: 1 / 1 / 2 / 4; appearance: none; padding-left: 27px; height: 25px; outline: 0; }
.combo-arrow { grid-area: 1 / 3; display: grid; place-items: center start; padding-left: 2px; height: 19px; border-left: 1px solid var(--shade); box-shadow: inset 1px 0 #fff; pointer-events: none; }

/* Work area */
.work { flex: 1; min-height: 0; display: flex; border-bottom: 1px solid #000; box-shadow: inset 0 -1px var(--shade); }
.dock { flex: 0 0 421px; display: flex; flex-direction: column; padding: 0 6px 1px 0; }
.dock-title { height: 25px; display: flex; align-items: center; justify-content: space-between; padding: 0 3px 0 2px; }
.float { width: 11px; height: 11px; }

.tabs { display: flex; align-items: flex-end; }
.tab { display: flex; align-items: center; height: 24px; padding-bottom: 2px; background: var(--mid); border-top: 1px solid #fff; border-left: 1px solid #fff; }
.tab.on { height: 29px; margin-bottom: -1px; padding-bottom: 3px; position: relative; background: var(--bg); border-right: 1px solid #000; box-shadow: inset -1px 0 var(--shade); }
.dock-tabs { height: 28px; }
.dock-tabs .tab { padding-left: 7px; padding-right: 8px; }
.dock-tabs .tab.on { padding-left: 7px; padding-right: 12px; gap: 7px; }
.frame { border: 1px solid #fff; border-right-color: #000; border-bottom-color: #000; box-shadow: inset -1px -1px var(--shade); }
.dock-frame { flex: 1; min-height: 0; display: flex; padding: 2px 3px 3px 3px; }
.tasks { flex: 1; min-width: 0; display: flex; flex-direction: column; padding: 18px 8px 8px 8px; background: linear-gradient(#e7e6e2, #b6b4af 210px); }

.btn { display: flex; align-items: center; justify-content: center; min-width: 0; height: 27px; background: var(--bg); box-shadow: inset 1px 1px #fff, inset -1px -1px #000, inset -2px -2px var(--shade); }
.btn:disabled { color: #8d8c88; }
.btn.hot { background: #edeae5; }
.btn.tall { height: 40px; }
.dialog-buttons { display: flex; justify-content: center; gap: 6px; margin-bottom: 17px; }
.dialog-buttons .btn { width: 85px; }

.job { flex: 1; min-height: 0; display: flex; flex-direction: column; }
.job-head { height: 25px; display: flex; align-items: center; gap: 4px; padding: 0 3px 0 7px; border: 1px solid #fff; border-radius: 4px 4px 0 0; color: #fff; background: linear-gradient(90deg, #4a6785, #70a0ca); }
.job-head h2 { flex: 1; }
.collapse { width: 14px; height: 14px; }
.job-body { flex: 1; min-height: 0; display: flex; flex-direction: column; padding: 5px 5px 5px; background: var(--bg); }
.job-tabs { height: 26px; flex: none; }
.job-tabs .tab { padding-left: 8px; padding-right: 8px; height: 23px; }
.job-tabs .tab.on { height: 27px; }
.job-tabs .tab:last-child { border-right: 1px solid #000; }
.page { flex: 1; min-height: 0; display: flex; flex-direction: column; padding: 13px 12px; }

.fold { height: 22px; flex: none; display: flex; text-align: left; }
.fold b, .fold span { flex: 1; border-top: 1px solid #716f70; box-shadow: inset 0 1px #fff; padding: 2px 0 0 4px; }

.scroller { flex: 1; min-height: 0; display: grid; grid-template: 1fr 16px / 1fr 16px; margin: 5px 0 7px; }
.view { overflow: hidden; min-height: 0; display: flex; flex-direction: column; justify-content: flex-end; padding: 0 12px 2px 11px; }
.setup { flex: none; }
.ext { display: grid; grid-template-columns: 61px 116px 117px; gap: 6px; align-items: center; text-align: right; }
.ext label { padding-right: 1px; }
.field { position: relative; height: 29px; display: flex; background: #fff; box-shadow: inset 1px 1px var(--shade), inset -1px -1px #fff, inset 2px 2px #000, inset -2px -2px var(--bg); }
.field input { flex: 1; min-width: 0; padding: 0 24px 0 4px; outline: 0; }
.field svg { position: absolute; right: 3px; top: 5px; }
.setup h3 { padding: 18px 0 8px; }
.setup h3.first { padding-top: 27px; }
.grid { display: grid; gap: 6px; padding-left: 17px; }
.two { grid-template-columns: repeat(2, minmax(0, 1fr)); }
.three { grid-template-columns: repeat(3, minmax(0, 1fr)); align-items: center; }
.flip { transform: scaleX(-1); }
.west { transform: rotate(-90deg); }
.east { transform: rotate(90deg); }

.spin { height: 23px; display: flex; background: #fff; border: 1px solid var(--shade); border-bottom-color: #fff; box-shadow: inset 1px 1px #000; }
.spin input { flex: 1; min-width: 0; padding-left: 3px; outline: 0; }
.steps { width: 12px; display: flex; flex-direction: column; border-left: 1px solid #000; margin-top: 1px; }
.steps button { flex: 1; display: grid; place-items: center; background: var(--bg); border-bottom: 1px solid #fff; }

.up, .down, .lt, .rt { width: 0; height: 0; border: 3px solid transparent; }
.up { border-bottom-color: #000; border-top: 0; }
.down { border-top-color: #000; border-bottom: 0; }
.lt { border-right-color: #777; border-left: 0; }
.rt { border-left-color: #000; border-right: 0; }

.vbar, .hbar { display: flex; background: var(--mid); box-shadow: inset 1px 1px var(--shade), inset -1px -1px #fff; padding: 1px; }
.vbar { flex-direction: column; }
.vbar button, .hbar button { flex: 0 0 14px; min-height: 14px; display: grid; place-items: center; background: var(--bg); box-shadow: inset 1px 1px #fff, inset -1px -1px #000, inset -2px -2px var(--shade); }
.thumb { background: var(--bg); box-shadow: inset 1px 1px #fff, inset -1px -1px #000, inset -2px -2px var(--shade); }
.vbar .thumb { flex: 204; }
.gap-a { flex: 77; }
.gap-b { flex: 80; }
.hbar .thumb { flex: 302; }
.gap-c { flex: 8; }

/* 3D view */
.docs { flex: 1; min-width: 0; display: flex; flex-direction: column; }
.scene { flex: 1; position: relative; overflow: hidden; background: linear-gradient(#333365, #9999ac); }
.origin { position: absolute; left: 242px; top: 202px; }
.plank { position: absolute; left: 210px; right: 0; top: 393px; height: 16px; display: flex; background: #0a0a0a; border: 2px solid #191919; border-right: 0; }
.plank span { border-right: 2px solid #191919; width: 14px; }
.plank span + span { width: 250px; }
.navcube { position: absolute; right: 0; top: 0; }
.navcube text { fill: #000; font-family: "Liberation Sans", sans-serif; }
.face-name { font-size: 18px; text-anchor: middle; }
.navcube .cube-axis { font-size: 8px; fill: #00f010; text-anchor: middle; }
.axes { position: absolute; right: 14px; bottom: 26px; }
.axes text { font: 10px "Liberation Sans", sans-serif; }

.doc-tabs { flex: 0 0 34px; display: flex; align-items: flex-start; border-top: 1px solid #aaa9a5; }
.doc { display: flex; align-items: center; height: 30px; padding: 0 9px 0 6px; background: var(--mid); border-left: 1px solid #fff; border-bottom: 1px solid #000; box-shadow: inset -1px -1px var(--shade); }
.doc-name { margin: 0 12px 0 6px; }
.doc.on { height: 33px; background: var(--bg); border-right: 1px solid #000; }
.doc.on .doc-name { margin-right: 12px; }
.close { --x-fill: #e8694a; --x-line: #d9452b; width: 14px; height: 14px; }
.close.off { --x-fill: #c6c5c1; --x-line: #a9a8a4; }
.x-box { fill: var(--x-fill); stroke: var(--x-line); }

/* Status bar */
.status { flex: 0 0 36px; display: flex; align-items: center; padding: 0 1px 0 6px; border-bottom: 1px solid #fff; }
.status p { flex: 1; }
.cell { display: flex; align-items: center; height: 32px; border: 1px solid #b9b8b2; box-shadow: inset 1px 1px #fff, -1px -1px #fff, 1px 1px #fff; }
.nav-style { width: 92px; justify-content: flex-end; padding-right: 10px; gap: 7px; margin-right: 4px; }
.nav-style .tri { border-width: 4px 4px 0; margin-left: -4px; }
.size { padding: 0 2px; }
.size-grip { align-self: flex-end; margin-left: 7px; }
```
